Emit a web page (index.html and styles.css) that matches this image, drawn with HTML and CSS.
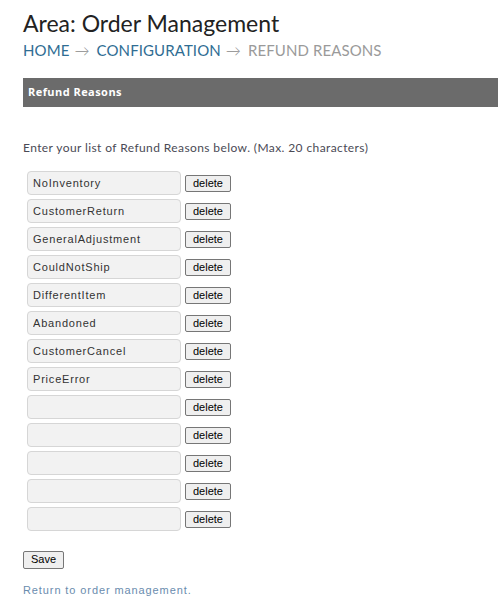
FILE: index.html
```html
<!DOCTYPE html>
<html>
<head>
<meta charset="utf-8">
<title>Refund Reasons</title>
<link rel="stylesheet" href="styles.css">
</head>
<body>
<div class="page">
  <h1 class="title">Area: Order Management</h1>
  <div class="crumbs">
    <a class="crumb" href="#">HOME</a><span class="arrow">&rarr;</span><a class="crumb" href="#">CONFIGURATION</a><span class="arrow">&rarr;</span><span class="crumb current">REFUND REASONS</span>
  </div>
  <div class="bar">Refund Reasons</div>
  <p class="intro">Enter your list of Refund Reasons below. (Max. 20 characters)</p>
  <form class="reasons">
    <div class="row"><input class="field" type="text" value="NoInventory"><button type="button" class="btn">delete</button></div>
    <div class="row"><input class="field" type="text" value="CustomerReturn"><button type="button" class="btn">delete</button></div>
    <div class="row"><input class="field" type="text" value="GeneralAdjustment"><button type="button" class="btn">delete</button></div>
    <div class="row"><input class="field" type="text" value="CouldNotShip"><button type="button" class="btn">delete</button></div>
    <div class="row"><input class="field" type="text" value="DifferentItem"><button type="button" class="btn">delete</button></div>
    <div class="row"><input class="field" type="text" value="Abandoned"><button type="button" class="btn">delete</button></div>
    <div class="row"><input class="field" type="text" value="CustomerCancel"><button type="button" class="btn">delete</button></div>
    <div class="row"><input class="field" type="text" value="PriceError"><button type="button" class="btn">delete</button></div>
    <div class="row"><input class="field" type="text" value=""><button type="button" class="btn">delete</button></div>
    <div class="row"><input class="field" type="text" value=""><button type="button" class="btn">delete</button></div>
    <div class="row"><input class="field" type="text" value=""><button type="button" class="btn">delete</button></div>
    <div class="row"><input class="field" type="text" value=""><button type="button" class="btn">delete</button></div>
    <div class="row"><input class="field" type="text" value=""><button type="button" class="btn">delete</button></div>
    <div class="actions"><button type="submit" class="btn save">Save</button></div>
  </form>
  <a class="back" href="#">Return to order management.</a>
</div>
</body>
</html>
```
FILE: styles.css
```css
html, body {
  margin: 0;
  padding: 0;
  background: #fff;
}

.page {
  padding: 8px 0 0 23px;
  font-family: Lato, "Liberation Sans", sans-serif;
  color: #333;
}

.title {
  margin: 0;
  font-family: Lato, sans-serif;
  font-weight: 400;
  font-size: 23px;
  line-height: 30px;
  color: #222;
}

.crumbs {
  margin-top: 3px;
  font-size: 15px;
  line-height: 18px;
  letter-spacing: 0.1px;
}

.crumb {
  color: #2f6d93;
  text-decoration: none;
}

.crumb.current {
  color: #9a9a9a;
}

.arrow {
  color: #8a8a8a;
  font-weight: 300;
  margin: 0 7px 0 5px;
}

.bar {
  margin-top: 19px;
  height: 29px;
  line-height: 28px;
  padding-left: 5px;
  background: #6b6b6b;
  color: #fff;
  font-family: "Open Sans", sans-serif;
  font-weight: 700;
  font-size: 11px;
  letter-spacing: 0.45px;
}

.intro {
  margin: 33px 0 0;
  font-size: 12px;
  line-height: 16px;
  letter-spacing: 0.4px;
  color: #4a4a55;
}

.reasons {
  margin-top: 13px;
  display: flex;
  flex-direction: column;
}

.row {
  display: flex;
  align-items: center;
  gap: 4px;
  padding-left: 4px;
  height: 28px;
}

.field {
  box-sizing: border-box;
  width: 154px;
  height: 24px;
  margin: 0;
  padding: 0 5px;
  border: 1px solid #d6d6d6;
  border-radius: 4px;
  background: #f2f2f2;
  font-family: "Liberation Sans", Arial, sans-serif;
  font-size: 11px;
  letter-spacing: 0.8px;
  color: #333;
}

.btn {
  box-sizing: border-box;
  height: 17px;
  margin: 0;
  padding: 0 7px;
  border: 1px solid #767676;
  border-radius: 2px;
  background: #efefef;
  font-family: "Liberation Sans", Arial, sans-serif;
  font-size: 11px;
  line-height: 15px;
  color: #000;
}

.actions {
  margin-top: 14px;
}

.save {
  height: 18px;
  padding: 0 7px;
}

.back {
  display: block;
  margin-top: 15px;
  font-family: "Liberation Sans", Arial, sans-serif;
  font-size: 11px;
  letter-spacing: 0.9px;
  color: #6a8cae;
  text-decoration: none;
}
```
